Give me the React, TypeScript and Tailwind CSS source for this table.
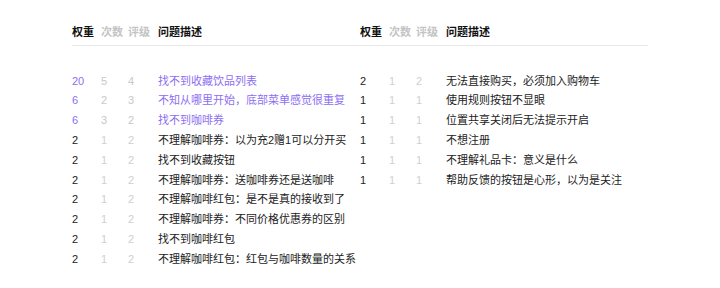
const LEFT: [string, string, string, string, boolean][] = [
  ["20", "5", "4", "找不到收藏饮品列表", true],
  ["6", "2", "3", "不知从哪里开始，底部菜单感觉很重复", true],
  ["6", "3", "2", "找不到咖啡券", true],
  ["2", "1", "2", "不理解咖啡券：以为充2赠1可以分开买", false],
  ["2", "1", "2", "找不到收藏按钮", false],
  ["2", "1", "2", "不理解咖啡券：送咖啡券还是送咖啡", false],
  ["2", "1", "2", "不理解咖啡红包：是不是真的接收到了", false],
  ["2", "1", "2", "不理解咖啡券：不同价格优惠券的区别", false],
  ["2", "1", "2", "找不到咖啡红包", false],
  ["2", "1", "2", "不理解咖啡红包：红包与咖啡数量的关系", false],
];

const RIGHT: [string, string, string, string, boolean][] = [
  ["2", "1", "2", "无法直接购买，必须加入购物车", false],
  ["1", "1", "1", "使用规则按钮不显眼", false],
  ["1", "1", "1", "位置共享关闭后无法提示开启", false],
  ["1", "1", "1", "不想注册", false],
  ["1", "1", "1", "不理解礼品卡：意义是什么", false],
  ["1", "1", "1", "帮助反馈的按钮是心形，以为是关注", false],
];

function Table({ rows }: { rows: [string, string, string, string, boolean][] }) {
  return (
    <div className="w-[288px]">
      <div className="flex items-center h-[26px] border-b border-[#e8e8e8] pb-[1px] text-[11px] font-bold">
        <div className="w-[29px] text-[#111]">权重</div>
        <div className="w-[27px] text-[#c4c4c4]">次数</div>
        <div className="w-[30px] text-[#c4c4c4]">评级</div>
        <div className="text-[#111]">问题描述</div>
      </div>
      <div className="pt-[25px]">
        {rows.map(([w, c, r, d, hot], i) => (
          <div key={i} className="flex items-center h-[19.8px] text-[11px]">
            <div className={`w-[29px] ${hot ? "text-[#8d6ef3]" : "text-[#222]"}`}>{w}</div>
            <div className={`w-[27px] ${hot ? "text-[#c8c8c8]" : "text-[#cfcfcf]"}`}>{c}</div>
            <div className={`w-[30px] ${hot ? "text-[#c8c8c8]" : "text-[#cfcfcf]"}`}>{r}</div>
            <div className={`whitespace-nowrap ${hot ? "text-[#8d6ef3]" : "text-[#222]"}`}>{d}</div>
          </div>
        ))}
      </div>
    </div>
  );
}

export default function App() {
  return (
    <div
      className="w-[720px] h-[288px] bg-white flex pl-[72px] pt-[20px]"
      style={{ fontFamily: '"Liberation Sans", "Noto Sans CJK SC", sans-serif' }}
    >
      <Table rows={LEFT} />
      <Table rows={RIGHT} />
    </div>
  );
}
